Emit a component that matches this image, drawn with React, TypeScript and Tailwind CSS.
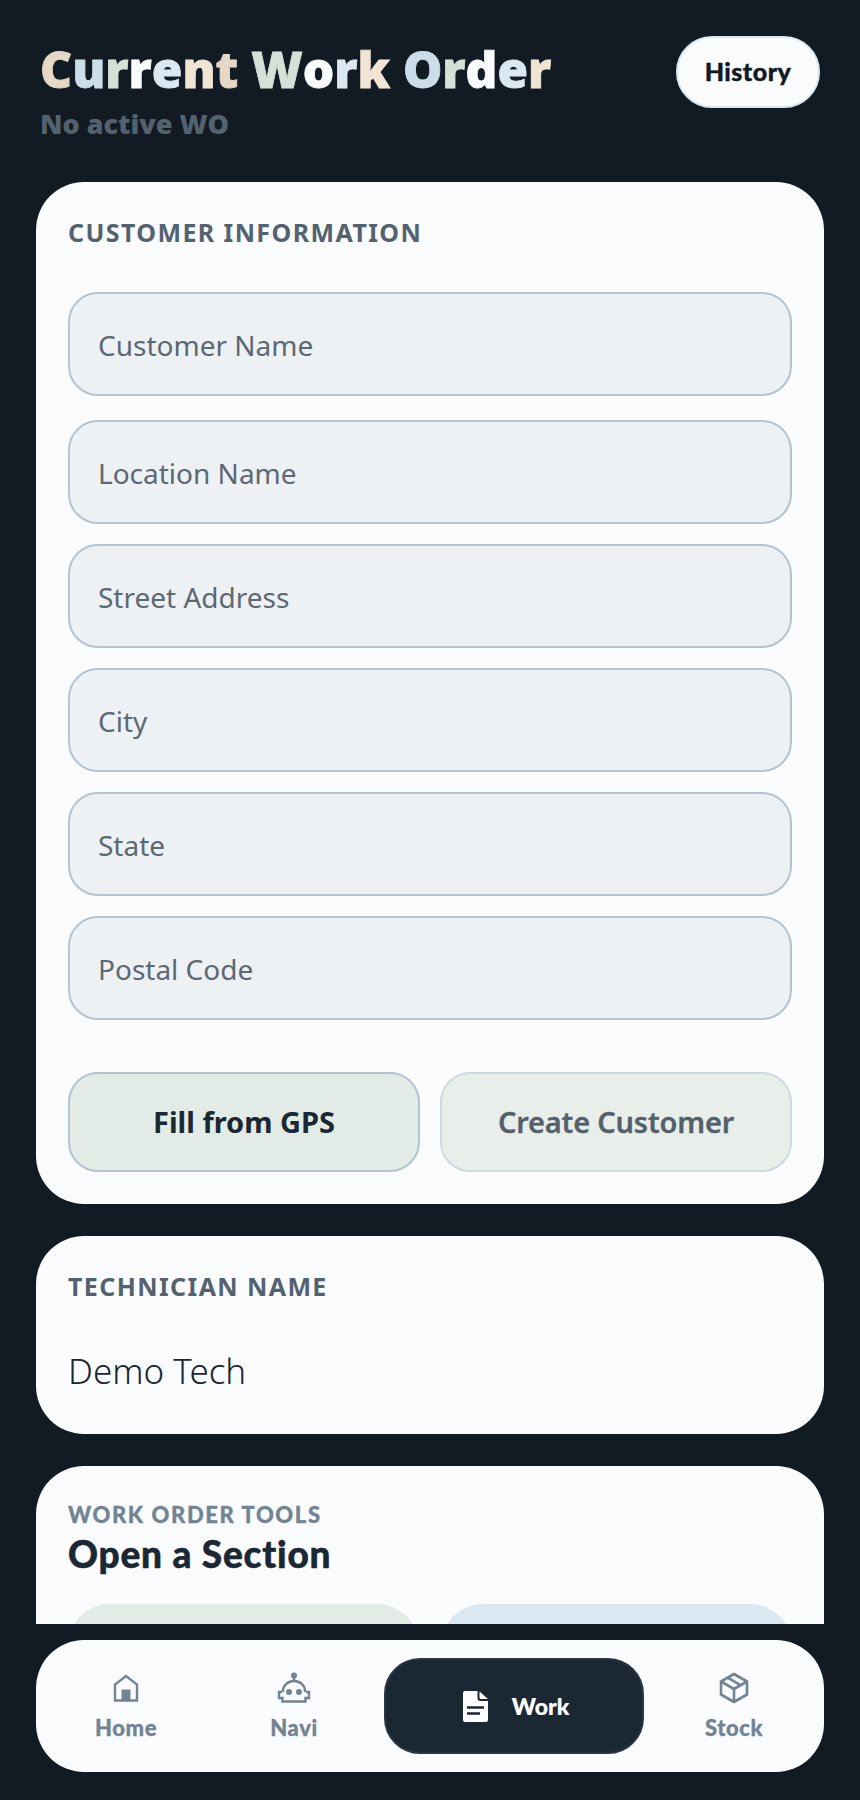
const titleLetters: [string, string][] = [
  ["C", "text-[#e6d8c6]"],
  ["u", "text-[#cbdde9]"],
  ["r", "text-[#d5e0d6]"],
  ["r", "text-[#f9fbfd]"],
  ["e", "text-[#dce8f1]"],
  ["n", "text-[#f0e4d4]"],
  ["t", "text-[#e6d8c6]"],
  [" ", ""],
  ["W", "text-[#d5e0d6]"],
  ["o", "text-[#f9fbfd]"],
  ["r", "text-[#dce8f1]"],
  ["k", "text-[#f0e4d4]"],
  [" ", ""],
  ["O", "text-[#cbdde9]"],
  ["r", "text-[#d5e0d6]"],
  ["d", "text-[#f9fbfd]"],
  ["e", "text-[#dce8f1]"],
  ["r", "text-[#f0e4d4]"],
];

const HomeIcon = () => (
  <svg width="26" height="28" viewBox="0 0 26 28" fill="none" stroke="currentColor" strokeWidth="2.4">
    <path d="M2 26.5V10.5L13 2l11 8.5v16z" />
    <rect x="8.5" y="15.5" width="9" height="11" fill="currentColor" stroke="none" />
  </svg>
);

const RobotIcon = () => (
  <svg width="34" height="32" viewBox="0 0 34 32" fill="none" stroke="currentColor" strokeWidth="2.4">
    <circle cx="17" cy="3.5" r="3" fill="currentColor" stroke="none" />
    <path d="M17 5v4" />
    <path d="M6 20v-1a11 10 0 0 1 22 0v1" />
    <path d="M5 20H2v6h3.5v3.5h23V26H32v-6h-3" />
    <circle cx="12" cy="20" r="3" fill="currentColor" stroke="none" />
    <circle cx="22" cy="20" r="3" fill="currentColor" stroke="none" />
  </svg>
);

const BoxIcon = () => (
  <svg width="30" height="32" viewBox="0 0 30 32" fill="none" stroke="currentColor" strokeWidth="2.6" strokeLinejoin="round">
    <path d="M15 2l13 7.5v13L15 30 2 22.500v-13z" />
    <path d="M2 9.500L15 17l13-7.500M15 17v13M8.500 5.700L21.500 13.200" />
  </svg>
);

const FileIcon = () => (
  <svg width="25" height="31" viewBox="0 0 25 31">
    <path
      fill="#ffffff"
      d="M2 0h12.500v7a3 3 0 0 0 3 3H25v19a2 2 0 0 1-2 2H2a2 2 0 0 1-2-2V2a2 2 0 0 1 2-2zM16.500 .5L25 8h-7a1.500 1.500 0 0 1-1.500-1.500z"
    />
    <path d="M4 16.500h17M4 22.500h13" stroke="#1b2733" strokeWidth="2.600" />
  </svg>
);

const Field = ({ placeholder, className = "" }: { placeholder: string; className?: string }) => (
  <input
    placeholder={placeholder}
    className={`block h-[104px] w-full rounded-[30px] border-2 border-[#b5c3d0] bg-[#edf1f4] px-[28px] pt-[2px] text-[28px] text-[#1b2733] outline-none placeholder:text-[#5c6873] ${className}`}
  />
);

const NavItem = ({ label, children }: { label: string; children: React.ReactNode }) => (
  <div className="flex w-[168px] flex-col items-center pt-[2px] text-[#728494]">
    <div className="flex h-[32px] items-center">{children}</div>
    <span className="mt-[9px] font-['Lato'] text-[22px] leading-[30px] font-black tracking-[0.6px] [-webkit-text-stroke:0.3px]">
      {label}
    </span>
  </div>
);

export default function App() {
  return (
    <div className="flex h-[1800px] w-full flex-col overflow-hidden bg-[#121a23] font-['Noto_Sans',sans-serif]">
      <main className="h-[1624px] overflow-hidden px-9">
        {/* Header */}
        <header className="flex items-start justify-between pt-[36px] pl-[4px]">
          <div>
            <h1 className="font-['Open_Sans'] text-[49.500px] leading-[66px] font-extrabold whitespace-pre [-webkit-text-stroke:0.8px]">
              {titleLetters.map(([ch, color], i) => (
                <span key={i} className={color}>
                  {ch}
                </span>
              ))}
            </h1>
            <p className="mt-[5px] font-['Open_Sans'] text-[27px] leading-[34px] font-extrabold text-[#54626f]">No active WO</p>
          </div>
          <button className="mr-[4px] h-[72px] w-[144px] rounded-[36px] border-2 border-[#dce8f1] bg-[#f9fbfd] font-['Lato'] text-[25px] font-black tracking-[0.5px] text-[#121a23] [-webkit-text-stroke:0.4px]">
            History
          </button>
        </header>

        {/* Customer */}
        <section className="mt-[41px] rounded-[48px] bg-[#f9fbfd] px-[32px] pt-[34px] pb-[32px]">
          <h2 className="text-[25px] leading-[32px] font-bold tracking-[1.4px] text-[#54626f]">CUSTOMER INFORMATION</h2>
          <div className="mt-[44px] flex flex-col gap-[20px]">
            <Field placeholder="Customer Name" className="mb-[4px]" />
            <Field placeholder="Location Name" />
            <Field placeholder="Street Address" />
            <Field placeholder="City" />
            <Field placeholder="State" />
            <Field placeholder="Postal Code" />
          </div>
          <div className="mt-[52px] grid grid-cols-2 gap-[20px]">
            <button className="h-[100px] rounded-[30px] border-2 border-[#b5c3d0] bg-[#e2ebe5] text-[29px] font-bold text-[#1b2733]">
              Fill from GPS
            </button>
            <button className="h-[100px] rounded-[30px] border-2 border-[#ced8df] bg-[#e8eee9] text-[29px] font-semibold tracking-[-0.2px] text-[#54606b] [-webkit-text-stroke:0.3px]">
              Create Customer
            </button>
          </div>
        </section>

        {/* Technician */}
        <section className="mt-[32px] h-[198px] rounded-[48px] bg-[#f9fbfd] px-[32px] pt-[34px]">
          <h2 className="text-[25px] leading-[32px] font-bold tracking-[1.4px] text-[#54626f]">TECHNICIAN NAME</h2>
          <p className="mt-[44px] text-[35px] leading-[50px] font-light text-[#1b2733]">Demo Tech</p>
        </section>

        {/* Tools */}
        <section className="mt-[32px] rounded-[48px] bg-[#f9fbfd] px-[32px] pt-[35px] pb-[32px]">
          <p className="font-['Lato'] text-[22px] leading-[28px] font-black tracking-[1.6px] text-[#728494] [-webkit-text-stroke:0.3px]">
            WORK ORDER TOOLS
          </p>
          <h2 className="mt-[2px] font-['Lato'] text-[37px] leading-[46px] font-black tracking-[0.8px] text-[#1b2733] [-webkit-text-stroke:0.5px]">
            Open a Section
          </h2>
          <div className="mt-[27px] grid grid-cols-2 gap-[22px]">
            <div className="h-[180px] rounded-[42px] bg-[#e2ebe5]" />
            <div className="h-[180px] rounded-[42px] bg-[#dce8f1]" />
          </div>
        </section>
      </main>

      {/* Bottom nav */}
      <nav className="mx-9 mt-[16px] flex h-[132px] items-center rounded-[48px] bg-[#f9fbfd] pl-[6px]">
        <NavItem label="Home">
          <HomeIcon />
        </NavItem>
        <NavItem label="Navi">
          <RobotIcon />
        </NavItem>
        <div className="mx-[6px] flex h-[96px] w-[260px] items-center justify-center gap-[24px] rounded-[36px] border-2 border-[#2a3642] bg-[#1b2733] pl-[4px] font-['Lato'] text-[23px] font-black text-white [-webkit-text-stroke:0.2px]">
          <FileIcon />
          <span className="pt-[1px]">Work</span>
        </div>
        <NavItem label="Stock">
          <BoxIcon />
        </NavItem>
      </nav>
    </div>
  );
}
